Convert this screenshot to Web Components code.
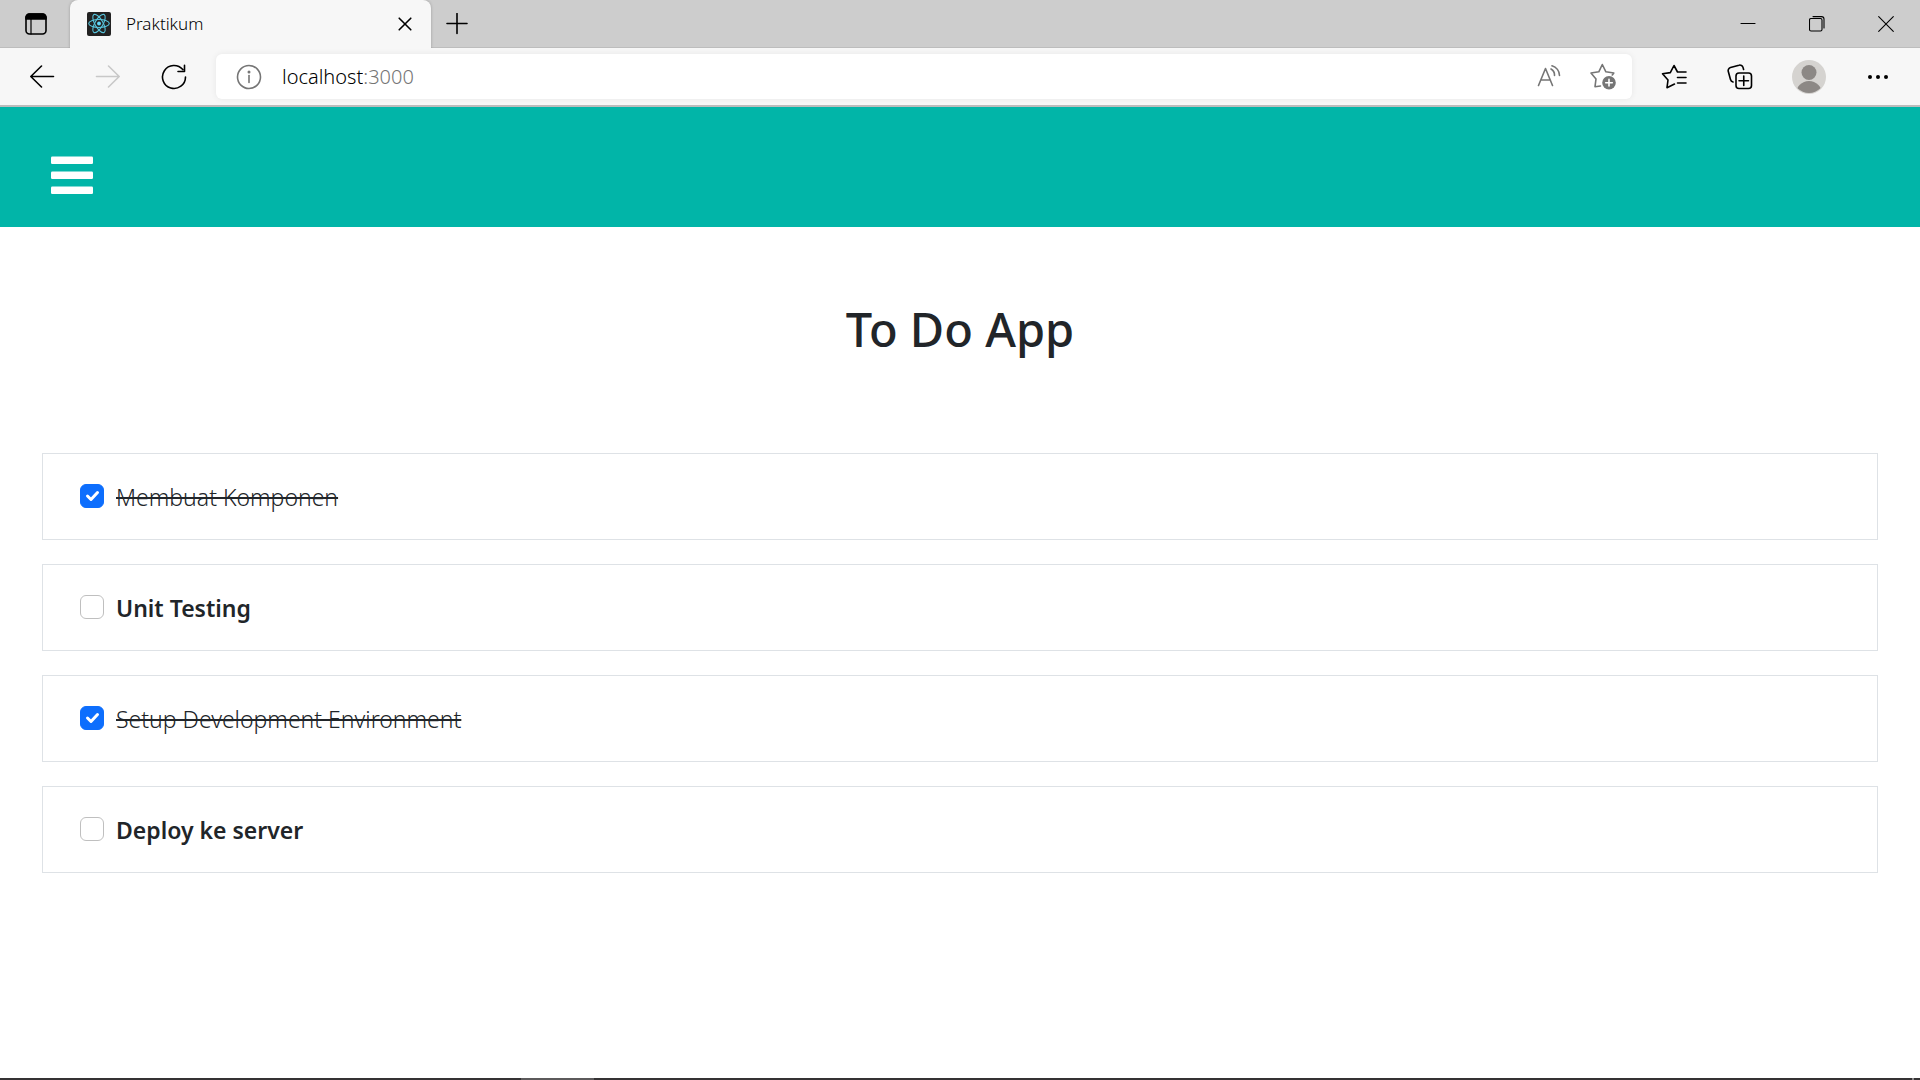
<!DOCTYPE html>
<html lang="id">
<head>
<meta charset="utf-8">
<title>Praktikum</title>
<style>
  html, body { margin: 0; }
  body { font-family: "Noto Sans", "Open Sans", sans-serif; color: #212529; background: #fff; }
</style>
</head>
<body>
<browser-window>
  <tab-strip slot="chrome"><browser-tab>Praktikum</browser-tab></tab-strip>
  <tool-bar slot="chrome" host="localhost" port=":3000"></tool-bar>
  <nav-header></nav-header>
  <todo-app heading="To Do App">
    <todo-item done>Membuat Komponen</todo-item>
    <todo-item>Unit Testing</todo-item>
    <todo-item done>Setup Development Environment</todo-item>
    <todo-item>Deploy ke server</todo-item>
  </todo-app>
  <task-bar slot="footer"></task-bar>
</browser-window>

<script>
const base = `
  :host, * { box-sizing: border-box; }
  button { font: inherit; color: inherit; background: none; border: 0; padding: 0; margin: 0;
    display: flex; align-items: center; justify-content: center; flex: none; }
  svg { display: block; flex: none; fill: none; stroke: currentColor; stroke-width: 1.6;
    stroke-linecap: round; stroke-linejoin: round; }
`;
function define(name, render) {
  customElements.define(name, class extends HTMLElement {
    constructor() {
      super();
      this.attachShadow({ mode: 'open' });
    }
    connectedCallback() {
      this.shadowRoot.innerHTML = render(this);
    }
  });
}

define('browser-window', () => `
  <style>${base}
    :host { display: flex; flex-direction: column; min-height: 100vh; }
    main { flex: 1; }
  </style>
  <slot name="chrome"></slot>
  <main><slot></slot></main>
  <slot name="footer"></slot>`);

define('tab-strip', () => `
  <style>${base}
    :host { display: flex; height: 48px; background: #cdcdcd; color: #000; box-shadow: inset 0 -1px #bdbdbd; }
    .actions { width: 70px; padding-left: 2px; }
    .new { width: 51px; }
    .controls { display: flex; margin-left: auto; }
    .controls button { width: 69px; }
    .controls svg { stroke-width: 1.1; }
  </style>
  <button class="actions" aria-label="Tab actions">
    <svg width="22" height="22" viewBox="0 0 22 22"><rect x="1" y="1" width="20" height="20" rx="3.5"/><path d="M1 6V4.500a3.500 3.500 0 0 1 3.500-3.500h13a3.500 3.500 0 0 1 3.500 3.500V6z" fill="currentColor"/><path d="M6 6v15" stroke-width="1.200"/></svg>
  </button>
  <slot></slot>
  <button class="new" aria-label="New tab">
    <svg width="22" height="22" viewBox="0 0 22 22"><path d="M1 10.500h20M11 .500v20"/></svg>
  </button>
  <div class="controls">
    <button aria-label="Minimize"><svg width="16" height="16" viewBox="0 0 16 16"><path d="M1 7.500h14"/></svg></button>
    <button aria-label="Restore"><svg width="16" height="16" viewBox="0 0 16 16"><rect x=".5" y="2.500" width="12.500" height="12.500" rx="1.500"/><path d="M4 .600h8.500a2.500 2.500 0 0 1 2.500 2.500V12"/></svg></button>
    <button aria-label="Close"><svg width="16" height="16" viewBox="0 0 16 16"><path d="M.700.700l14.600 14.600M15.300.700L.700 15.300"/></svg></button>
  </div>`);

define('browser-tab', () => `
  <style>${base}
    :host { display: flex; align-items: center; gap: 15px; width: 361px; padding: 0 6px 0 17px;
      background: #f7f7f7; border-radius: 8px 8px 0 0; font-size: 17px; line-height: 24px; font-weight: 350;
      box-shadow: 0 0 3px rgba(0,0,0,.25); clip-path: inset(0 -4px 0 -4px); }
    .title { flex: 1; }
    .close { width: 40px; height: 32px; }
    .favicon { stroke: #57c4dc; stroke-width: 1.1; }
  </style>
  <svg class="favicon" width="24" height="24" viewBox="0 0 24 24">
    <rect width="24" height="24" rx="2" fill="#222" stroke="none"/>
    <circle cx="12" cy="11.500" r="1.900" fill="#61dafb" stroke="none"/>
    <ellipse cx="12" cy="11.500" rx="10.300" ry="4"/>
    <ellipse cx="12" cy="11.500" rx="10.300" ry="4" transform="rotate(60 12 11.500)"/>
    <ellipse cx="12" cy="11.500" rx="10.300" ry="4" transform="rotate(120 12 11.500)"/>
  </svg>
  <span class="title"><slot></slot></span>
  <button class="close" aria-label="Close tab"><svg width="14" height="14" viewBox="0 0 14 14"><path d="M1.200 1.200l11.600 11.600M12.800 1.200L1.200 12.800"/></svg></button>`);

define('tool-bar', el => `
  <style>${base}
    :host { display: flex; align-items: center; height: 59px; padding: 0 9px; background: #f7f7f7;
      border-bottom: 2px solid #bcbcbc; color: #000; }
    button { width: 66px; height: 45px; }
    .disabled { color: #c8c8c8; }
    .address { flex: 1; display: flex; align-items: center; height: 45px; margin: 0 9px; padding-right: 2px;
      background: #fff; border-radius: 6px; box-shadow: 0 0 6px rgba(0,0,0,.07);
      color: #757575; font-size: 20px; line-height: 28px; font-weight: 350; }
    .address button.small { width: 54px; }
    input { field-sizing: content; font: inherit; color: #000; border: 0; padding: 0; margin: 0; background: none; outline: 0; }
    .port { flex: 1; }
    .profile { width: 72px; }
  </style>
  <button aria-label="Back"><svg width="26" height="24" viewBox="0 0 26 24"><path d="M24.500 11.500H2M12.500 1L1.800 11.500l10.700 10.500"/></svg></button>
  <button class="disabled" aria-label="Forward"><svg width="26" height="24" viewBox="0 0 26 24"><path d="M1.500 11.500H24M13.500 1L24.200 11.500 13.500 22"/></svg></button>
  <button aria-label="Refresh"><svg width="26" height="26" viewBox="0 0 26 26"><path d="M24.500 13a11.500 11.500 0 1 1-2.700-7.400M23.500 1.200V7.500H17"/></svg></button>
  <div class="address">
    <button aria-label="Site information"><svg width="26" height="26" viewBox="0 0 26 26"><circle cx="13" cy="13" r="11.500"/><path d="M13 11.500v7"/><circle cx="13" cy="8" r=".7" fill="currentColor"/></svg></button>
    <input id="url" type="text" aria-label="Address" value="${el.getAttribute('host')}"><label class="port" for="url">${el.getAttribute('port')}</label>
    <button class="small" aria-label="Read aloud"><svg width="24" height="24" viewBox="0 0 24 24"><path d="M1.500 20.500L8.500 3.500l7 17M4 15h9M14 4a7 7 0 0 1 3.500 6.500M15 .800A10 10 0 0 1 22.500 10.500"/></svg></button>
    <button class="small" aria-label="Add to favorites"><svg width="27" height="27" viewBox="0 0 27 27"><path d="M10.500 23L5 23.700l1-7.700-5-6 7.800-1.200L12.300 1.500l3.600 7.300 7.900 1.200-1.500 2"/><circle cx="19" cy="19.700" r="6.800" fill="currentColor" stroke="none"/><path d="M15.700 19.700h6.600M19 16.400v6.600" stroke="#fff"/></svg></button>
  </div>
  <button aria-label="Favorites"><svg width="26" height="26" viewBox="0 0 26 26"><path d="M13.500 20L6 23.700l1-7.700-5.500-6.200 7.800-1.200L13 1.500l3.500 6.500H25M16.500 13.500H25M16.500 19H25"/></svg></button>
  <button aria-label="Collections"><svg width="26" height="26" viewBox="0 0 26 26"><rect x="9" y="9" width="15.500" height="15.500" rx="3"/><path d="M16.750 12v9.500M12 16.750h9.500M6 18A3.500 3.500 0 0 1 3.500 15.500L1.300 7.500A3.200 3.200 0 0 1 3.500 3.500L12 1.200a3.200 3.200 0 0 1 4 2.200L16.600 5.500"/></svg></button>
  <button class="profile" aria-label="Profile"><svg width="34" height="34" viewBox="0 0 34 34" style="stroke:none"><clipPath id="c"><circle cx="17" cy="17" r="16"/></clipPath><circle cx="17" cy="17" r="17" fill="#d5d3d0"/><g clip-path="url(#c)" fill="#8c8885"><circle cx="17" cy="12.500" r="7.500"/><circle cx="17" cy="34" r="13"/></g></svg></button>
  <button aria-label="Settings and more"><svg width="20" height="4" viewBox="0 0 20 4" style="stroke:none"><g fill="#000"><circle cx="2" cy="2" r="2"/><circle cx="10" cy="2" r="2"/><circle cx="18" cy="2" r="2"/></g></svg></button>`);

define('nav-header', () => `
  <style>${base}
    :host { display: flex; align-items: flex-end; height: 120px; padding: 32px 51px; background: #01b5a8; color: #fff; }
    button { width: 42px; height: 40px; }
  </style>
  <button aria-label="Menu"><svg width="42" height="40" viewBox="0 0 42 40" style="stroke:none"><g fill="#fff"><rect y="1.500" width="42" height="7.500" rx="1.300"/><rect y="16.500" width="42" height="7.500" rx="1.300"/><rect y="31.500" width="42" height="7.500" rx="1.300"/></g></svg></button>`);

define('todo-app', el => `
  <style>${base}
    :host { display: block; padding: 72px 42px; }
    h1 { margin: 0 0 94px; font-size: 47px; line-height: 60px; font-weight: 500; text-align: center; }
    .list { display: flex; flex-direction: column; gap: 24px; }
  </style>
  <h1>${el.getAttribute('heading')}</h1>
  <div class="list"><slot></slot></div>`);

define('todo-item', el => `
  <style>${base}
    :host { display: flex; align-items: center; gap: 12px; height: 87px; padding: 0 37px 1px; border: 1px solid #dee2e6;
      font-size: 23px; line-height: 36px; font-weight: 650; }
    :host([done]) { font-weight: 350; }
    label { padding-top: 2px; }
    :host([done]) label { text-decoration: line-through; text-decoration-thickness: 2px; }
    .box { display: grid; }
    .box > * { grid-area: 1 / 1; }
    input { appearance: none; width: 24px; height: 24px; margin: 0; border: 1px solid #bfbfbf; border-radius: 6px; background: #fff; }
    input:checked { background: #0d6efd; border-color: #0d6efd; }
    svg { pointer-events: none; stroke: #fff; stroke-width: 3; visibility: hidden; }
    input:checked + svg { visibility: visible; }
  </style>
  <span class="box"><input id="check" type="checkbox" ${el.hasAttribute('done') ? 'checked' : ''}><svg width="24" height="24" viewBox="0 0 24 24"><path d="M7.500 12l3.500 3.500 6.500-7"/></svg></span>
  <label for="check"><slot></slot></label>`);

define('task-bar', () => `
  <style>${base}
    :host { display: flex; justify-content: space-between; height: 2px; background: #353334; padding: 0 6px 0 521px; }
    .active { width: 73px; background: #5c5a5b; }
    .peek { width: 2px; background: #8c8a8b; }
  </style>
  <span class="active"></span><span class="peek"></span>`);
</script>
</body>
</html>
